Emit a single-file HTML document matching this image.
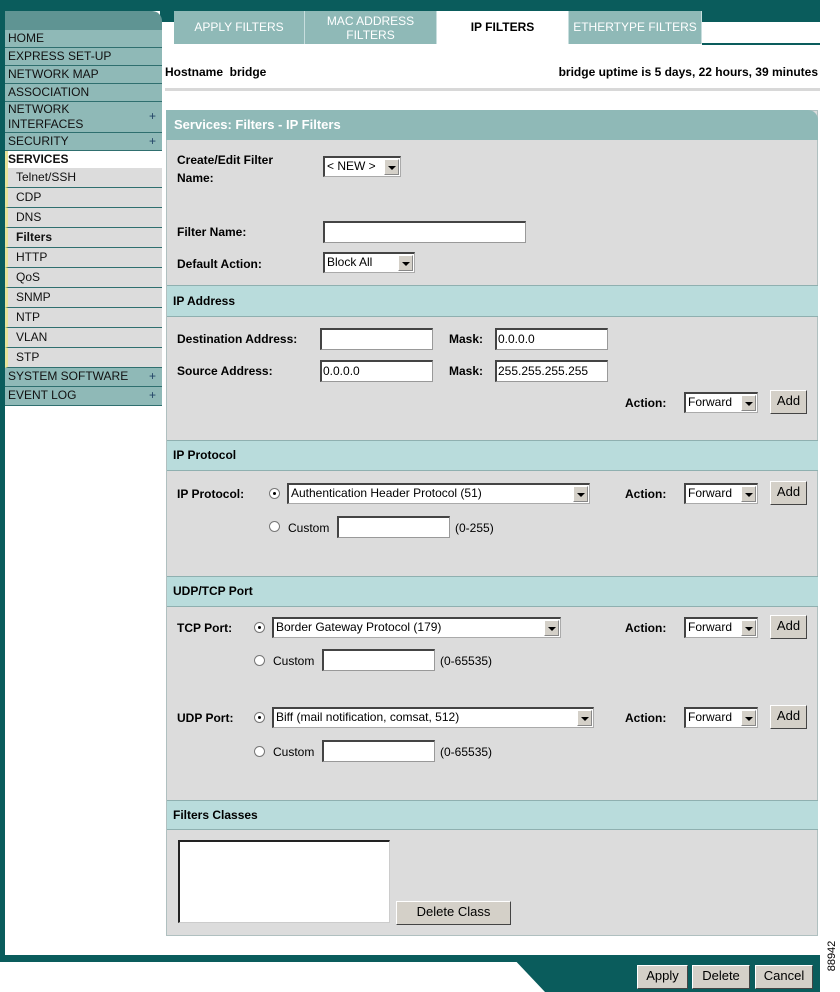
<!DOCTYPE html>
<html><head><meta charset="utf-8"><style>
*{margin:0;padding:0;box-sizing:border-box}
body{width:840px;height:992px;position:relative;background:#fff;font-family:"Liberation Sans",Arial,sans-serif;font-size:12px;color:#000;overflow:hidden}
.a{position:absolute}
.dk{background:#0a5c5c}
.nav{position:absolute;left:5px;width:157px;background:#8fb9b7;border-bottom:1px solid #2f6f6f;padding-left:3px;font-size:12px;line-height:17px;color:#111}
.nav .p{position:absolute;right:6px;top:0;color:#246}
.sub{position:absolute;left:5px;width:157px;background:#dcdcdc;border-bottom:1px solid #2f6f6f;border-left:3px solid #e8e49a;padding-left:8px;line-height:19px;color:#111}
.tab{position:absolute;top:11px;height:33px;background:#8fb9b7;color:#fff;text-align:center;font-size:12px;line-height:14px;border-right:1px solid #c8dede}
.b{font-weight:bold}
.inp{position:absolute;background:#fff;border:1px solid #999;border-top:2px solid #444;border-left:2px solid #444;height:22px;padding-left:1px;line-height:18px}
.sel{position:absolute;background:#fff;border:1px solid #aaa;border-top:2px solid #444;border-left:2px solid #444;height:21px;padding-left:2px;line-height:17px}
.sel i{position:absolute;right:1px;top:1px;width:15px;height:16px;background:#d4d0c8;border:1px solid #888;border-top-color:#fff;border-left-color:#fff}
.sel i:after{content:"";position:absolute;left:3px;top:6px;border-left:4px solid transparent;border-right:4px solid transparent;border-top:4px solid #000}
.btn{position:absolute;background:#d4d0c8;border:1px solid #444;border-top-color:#fff;border-left-color:#fff;text-align:center;line-height:20px;font-size:13px}
.sec{position:absolute;left:167px;width:651px;background:#b9dcdc;border-top:1px solid #8fb0b0;border-bottom:1px solid #8fb0b0;font-weight:bold;padding-left:6px}
.rad{position:absolute;width:11px;height:11px;border-radius:50%;background:#fff;border:1px solid #777}
.rad.on:after{content:"";position:absolute;left:3px;top:3px;width:3px;height:3px;background:#000;border-radius:50%}
</style></head><body>
<div class="a dk" style="left:0;top:0;width:820px;height:11px"></div>
<div class="a dk" style="left:160px;top:0;width:660px;height:22px"></div>
<div class="a dk" style="left:0;top:0;width:5px;height:962px"></div>
<div class="a" style="left:5px;top:11px;width:157px;height:20px;background:#5f9493;border-top-right-radius:10px"></div>
<div class="a" style="left:702px;top:43px;width:118px;height:2px;background:#0a5c5c"></div>

<div class="tab" style="left:174px;width:131px;line-height:33px">APPLY FILTERS</div>
<div class="tab" style="left:305px;width:132px;padding-top:3px">MAC ADDRESS<br>FILTERS</div>
<div class="tab b" style="left:437px;width:132px;background:#fff;color:#000;line-height:33px">IP FILTERS</div>
<div class="tab" style="left:569px;width:133px;line-height:33px">ETHERTYPE FILTERS</div>

<div class="nav" style="top:30px;height:18px">HOME</div>
<div class="nav" style="top:48px;height:18px">EXPRESS SET-UP</div>
<div class="nav" style="top:66px;height:18px">NETWORK MAP</div>
<div class="nav" style="top:84px;height:18px">ASSOCIATION</div>
<div class="nav" style="top:102px;height:31px;line-height:15px">NETWORK<br>INTERFACES<span class="p" style="top:7px">+</span></div>
<div class="nav" style="top:133px;height:18px">SECURITY<span class="p">+</span></div>
<div class="nav b" style="top:151px;height:18px;background:#fff;border-left:3px solid #e8e49a;padding-left:0">SERVICES</div>
<div class="sub" style="top:168px;height:20px">Telnet/SSH</div>
<div class="sub" style="top:188px;height:20px">CDP</div>
<div class="sub" style="top:208px;height:20px">DNS</div>
<div class="sub b" style="top:228px;height:20px">Filters</div>
<div class="sub" style="top:248px;height:20px">HTTP</div>
<div class="sub" style="top:268px;height:20px">QoS</div>
<div class="sub" style="top:288px;height:20px">SNMP</div>
<div class="sub" style="top:308px;height:20px">NTP</div>
<div class="sub" style="top:328px;height:20px">VLAN</div>
<div class="sub" style="top:348px;height:20px">STP</div>
<div class="nav" style="top:368px;height:19px">SYSTEM SOFTWARE<span class="p">+</span></div>
<div class="nav" style="top:387px;height:19px">EVENT LOG<span class="p">+</span></div>

<div class="a b" style="left:165px;top:65px">Hostname&nbsp; bridge</div>
<div class="a b" style="right:22px;top:65px">bridge uptime is 5 days, 22 hours, 39 minutes</div>
<div class="a" style="left:165px;top:88px;width:655px;height:3px;background:#d8d8d8"></div>

<div class="a" style="left:166px;top:110px;width:652px;height:826px;background:#dcdcdc;border:1px solid #b0c0c0"></div>
<div class="a b" style="left:166px;top:110px;width:652px;height:30px;background:#8fb9b7;color:#fff;font-size:13px;line-height:30px;padding-left:8px;border-top-right-radius:10px">Services: Filters - IP Filters</div>

<div class="a b" style="left:177px;top:151px;line-height:18px">Create/Edit Filter<br>Name:</div>
<div class="sel" style="left:323px;top:156px;width:78px">&lt; NEW &gt;<i></i></div>
<div class="a b" style="left:177px;top:225px">Filter Name:</div>
<div class="inp" style="left:323px;top:221px;width:203px"></div>
<div class="a b" style="left:177px;top:257px">Default Action:</div>
<div class="sel" style="left:323px;top:252px;width:92px">Block All<i></i></div>

<div class="sec" style="top:285px;height:32px;line-height:30px">IP Address</div>
<div class="a b" style="left:177px;top:332px">Destination Address:</div>
<div class="inp" style="left:320px;top:328px;width:113px"></div>
<div class="a b" style="left:449px;top:332px">Mask:</div>
<div class="inp" style="left:495px;top:328px;width:113px">0.0.0.0</div>
<div class="a b" style="left:177px;top:364px">Source Address:</div>
<div class="inp" style="left:320px;top:360px;width:113px">0.0.0.0</div>
<div class="a b" style="left:449px;top:364px">Mask:</div>
<div class="inp" style="left:495px;top:360px;width:113px">255.255.255.255</div>
<div class="a b" style="left:625px;top:396px">Action:</div>
<div class="sel" style="left:684px;top:392px;width:74px">Forward<i></i></div>
<div class="btn" style="left:770px;top:390px;width:37px;height:24px">Add</div>

<div class="sec" style="top:440px;height:31px;line-height:29px">IP Protocol</div>
<div class="a b" style="left:177px;top:487px">IP Protocol:</div>
<div class="rad on" style="left:269px;top:488px"></div>
<div class="sel" style="left:287px;top:483px;width:303px">Authentication Header Protocol (51)<i></i></div>
<div class="a b" style="left:625px;top:487px">Action:</div>
<div class="sel" style="left:684px;top:483px;width:74px">Forward<i></i></div>
<div class="btn" style="left:770px;top:481px;width:37px;height:24px">Add</div>
<div class="rad" style="left:269px;top:521px"></div>
<div class="a" style="left:288px;top:521px">Custom</div>
<div class="inp" style="left:337px;top:516px;width:113px"></div>
<div class="a" style="left:455px;top:521px">(0-255)</div>

<div class="sec" style="top:576px;height:31px;line-height:29px">UDP/TCP Port</div>
<div class="a b" style="left:177px;top:621px">TCP Port:</div>
<div class="rad on" style="left:254px;top:622px"></div>
<div class="sel" style="left:272px;top:617px;width:289px">Border Gateway Protocol (179)<i></i></div>
<div class="a b" style="left:625px;top:621px">Action:</div>
<div class="sel" style="left:684px;top:617px;width:74px">Forward<i></i></div>
<div class="btn" style="left:770px;top:615px;width:37px;height:24px">Add</div>
<div class="rad" style="left:254px;top:655px"></div>
<div class="a" style="left:273px;top:654px">Custom</div>
<div class="inp" style="left:322px;top:649px;width:113px"></div>
<div class="a" style="left:440px;top:654px">(0-65535)</div>

<div class="a b" style="left:177px;top:711px">UDP Port:</div>
<div class="rad on" style="left:254px;top:712px"></div>
<div class="sel" style="left:272px;top:707px;width:322px">Biff (mail notification, comsat, 512)<i></i></div>
<div class="a b" style="left:625px;top:711px">Action:</div>
<div class="sel" style="left:684px;top:707px;width:74px">Forward<i></i></div>
<div class="btn" style="left:770px;top:705px;width:37px;height:24px">Add</div>
<div class="rad" style="left:254px;top:746px"></div>
<div class="a" style="left:273px;top:745px">Custom</div>
<div class="inp" style="left:322px;top:740px;width:113px"></div>
<div class="a" style="left:440px;top:745px">(0-65535)</div>

<div class="sec" style="top:800px;height:30px;line-height:28px">Filters Classes</div>
<div class="a" style="left:178px;top:840px;width:212px;height:83px;background:#fff;border:1px solid #ccc;border-top:2px solid #222;border-left:2px solid #222"></div>
<div class="btn" style="left:396px;top:901px;width:115px;height:24px">Delete Class</div>

<div class="a dk" style="left:0;top:955px;width:820px;height:7px"></div>
<svg class="a" style="left:500px;top:955px" width="320" height="37"><polygon points="10,0 320,0 320,37 45,37" fill="#0a5c5c"/></svg>
<div class="btn" style="left:637px;top:965px;width:51px;height:24px">Apply</div>
<div class="btn" style="left:692px;top:965px;width:58px;height:24px">Delete</div>
<div class="btn" style="left:755px;top:965px;width:58px;height:24px">Cancel</div>
<div class="a" style="left:812px;top:950px;font-size:11px;transform:rotate(-90deg);transform-origin:center;width:40px;text-align:center">88942</div>
</body></html>
